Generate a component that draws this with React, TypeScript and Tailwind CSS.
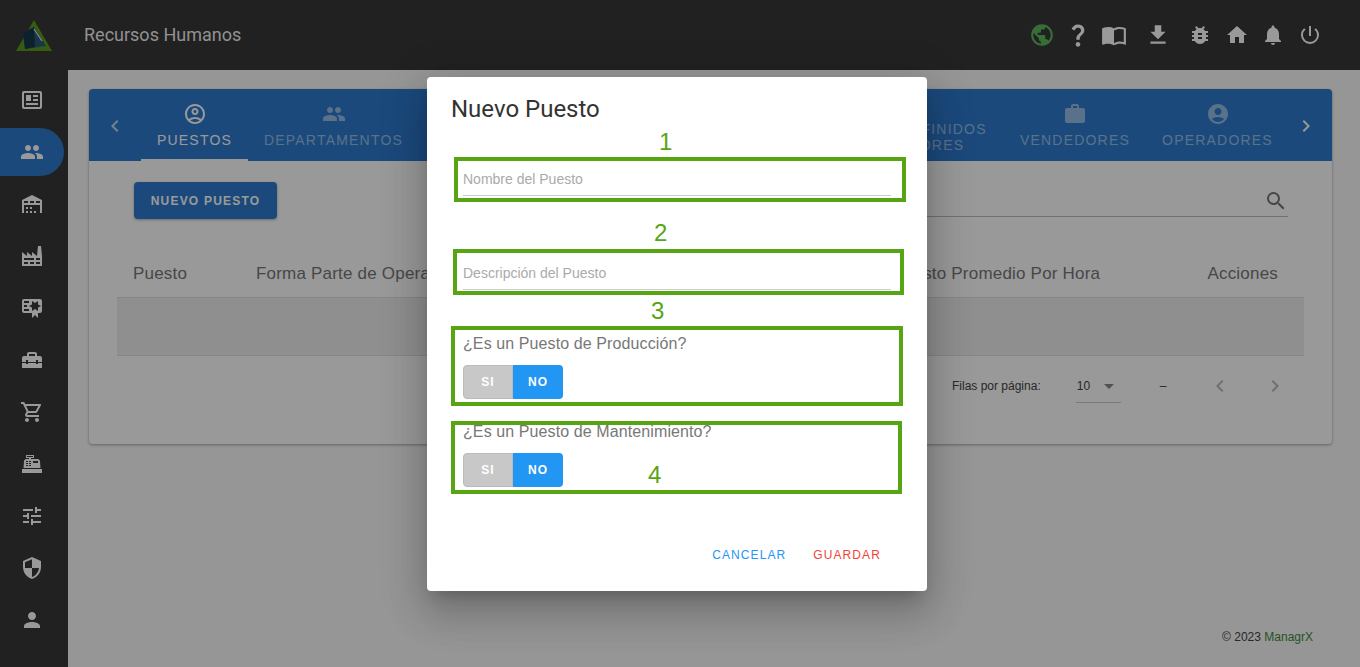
import React from "react"
import {
  MdAccountCircle, MdArrowDropDown, MdBugReport, MdChevronLeft, MdChevronRight, MdFileDownload, MdHome,
  MdNotifications, MdOutlineAccountCircle, MdOutlineShoppingCart, MdPeople, MdPerson, MdPowerSettingsNew,
  MdPublic, MdQuestionMark, MdSearch, MdSecurity, MdTune, MdWork,
} from "react-icons/md"

const MdiIcon = ({ d, className }: { d: string; className?: string }) => (
  <svg viewBox="0 0 24 24" fill="currentColor" className={className}>
    <path d={d} />
  </svg>
)

const paths = {
  news: "M20 3H4C2.89 3 2 3.89 2 5V19C2 20.11 2.89 21 4 21H20C21.11 21 22 20.11 22 19V5C22 3.89 21.11 3 20 3M20 19H4V5H20V19M6 7H11V13H6V7M13 7H18V9H13V7M13 11H18V13H13V11M6 15H18V17H6V15Z",
  warehouse: "M6 19H8V21H6V19M12 3L2 8V21H4V13H20V21H22V8L12 3M8 11H4V9H8V11M14 11H10V9H14V11M20 11H16V9H20V11M6 15H8V17H6V15M10 15H12V17H10V15M10 19H12V21H10V19M14 19H16V21H14V19Z",
  factory: "M4,18V20H8V18H4M4,14V16H14V14H4M10,18V20H14V18H10M16,14V16H20V14H16M16,18V20H20V18H16M2,22V8L7,12V8L12,12V8L17,12L18,2H21L22,12V22H2Z",
  certificate: "M4,3C2.89,3 2,3.89 2,5V15A2,2 0 0,0 4,17H12V22L15,19L18,22V17H20A2,2 0 0,0 22,15V8L22,6V5A2,2 0 0,0 20,3H16V3H4M12,5L15,7L18,5V8.5L21,10L18,11.5V15L15,13L12,15V11.5L9,10L12,8.5V5M4,5H9V7H4V5M4,9H7V11H4V9M4,13H9V15H4V13Z",
  toolbox: "M18 16H16V15H8V16H6V15H2V20H22V15H18V16M20 8H17V6C17 4.9 16.1 4 15 4H9C7.9 4 7 4.9 7 6V8H4C2.9 8 2 8.9 2 10V14H6V12H8V14H16V12H18V14H22V10C22 8.9 21.1 8 20 8M15 8H9V6H15V8Z",
  register: "M2,17H22V21H2V17M6.25,7H9V6H6V3H14V6H11V7H17.8C18.8,7 19.8,8 20,9L20.5,16H3.5L4.05,9C4.05,8 5.05,7 6.25,7M13,9V11H18V9H13M6,9V10H8V9H6M9,9V10H11V9H9M6,11V12H8V11H6M9,11V12H11V11H9M6,13V14H8V13H6M9,13V14H11V13H9M7,4V5H13V4H7Z",
  book: "M12 21.5C10.65 20.65 8.2 20 6.5 20C4.85 20 3.15 20.3 1.75 21.05C1.65 21.1 1.6 21.1 1.5 21.1C1.25 21.1 1 20.85 1 20.6V6C1.6 5.55 2.25 5.25 3 5C4.11 4.65 5.33 4.5 6.5 4.5C8.45 4.5 10.55 4.9 12 6C13.45 4.9 15.55 4.5 17.5 4.5C18.67 4.5 19.89 4.65 21 5C21.75 5.25 22.4 5.55 23 6V20.6C23 20.85 22.75 21.1 22.5 21.1C22.4 21.1 22.35 21.1 22.25 21.05C20.85 20.3 19.15 20 17.5 20C15.8 20 13.35 20.65 12 21.5M12 8V19.5C13.35 18.65 15.8 18 17.5 18C18.7 18 19.9 18.15 21 18.5V7C19.9 6.65 18.7 6.5 17.5 6.5C15.8 6.5 13.35 7.15 12 8Z",
}

const iconClass = "w-6 h-6"

const sideItems = [
  <MdiIcon d={paths.news} className={iconClass} />,
  <MdPeople className={iconClass} />,
  <MdiIcon d={paths.warehouse} className={iconClass} />,
  <MdiIcon d={paths.factory} className={iconClass} />,
  <MdiIcon d={paths.certificate} className={iconClass} />,
  <MdiIcon d={paths.toolbox} className={iconClass} />,
  <MdOutlineShoppingCart className={iconClass} />,
  <MdiIcon d={paths.register} className={iconClass} />,
  <MdTune className={iconClass} />,
  <MdSecurity className={iconClass} />,
  <MdPerson className={iconClass} />,
]

function Field({ placeholder, className }: { placeholder: string; className: string }) {
  return (
    <div className={`ml-[13px] mr-[12px] h-[33px] pt-[2px] flex items-center border-b border-[#cccccc] text-[14px] text-[#aaaaaa] ${className}`}>
      {placeholder}
    </div>
  )
}

function Toggle() {
  return (
    <div className="ml-[13px] mt-[9px] flex w-[100px] h-[34px] text-[12px] font-bold tracking-[1px] text-white">
      <div className="w-[50px] flex items-center justify-center rounded-l-[4px] bg-[#c8c8c8] border border-[#bbbbbb]">SI</div>
      <div className="w-[50px] flex items-center justify-center rounded-r-[4px] bg-[#2196f3]">NO</div>
    </div>
  )
}

function Note({ className }: { className: string }) {
  return <div className={`absolute border-[4px] border-[#57a513] ${className}`} />
}

function NoteNumber({ value, className }: { value: string; className: string }) {
  return (
    <span className={`absolute text-[24px] leading-[28px] text-[#57a513] ${className}`}>
      {value}
    </span>
  )
}

export default function App() {
  return (
    <div className="relative h-screen overflow-hidden flex flex-col bg-[#fafafa] font-['Liberation_Sans',sans-serif]">
      {/* top bar */}
      <header className="h-[70px] shrink-0 flex items-center bg-[#373737] text-white">
        <div className="w-[68px] flex justify-center">
          <svg viewBox="0 0 38 34" className="w-[38px] h-[34px] mt-[1px] mr-[1px]">
            <polygon points="19,1 37,32 1,32" fill="#5a9a1e" />
            <polygon points="19,8 31,27 10,30 8,14" fill="#2a5a78" />
            <polygon points="8,14 19,8 20,28 10,30" fill="#16384a" />
            <line x1="19" y1="10" x2="27" y2="22" stroke="#e8e8e8" strokeWidth="1.2" />
          </svg>
        </div>
        <h1 className="ml-[16px] mb-[2px] text-[18px] font-['Roboto',sans-serif] text-white/95">Recursos Humanos</h1>
        <div className="ml-auto pr-[32px] flex items-center">
          <div className="w-9 flex justify-center text-[#5cb85c]"><MdPublic className="w-[26px] h-[26px]" /></div>
          <div className="w-9 flex justify-center"><MdQuestionMark className="w-[28px] h-[28px]" /></div>
          <div className="w-9 flex justify-center"><MdiIcon d={paths.book} className="w-[26px] h-[26px]" /></div>
          <div className="w-9 ml-2 flex justify-center"><MdFileDownload className="w-[26px] h-[26px]" /></div>
          <div className="w-9 ml-[6px] flex justify-center"><MdBugReport className="w-6 h-6" /></div>
          <div className="w-9 ml-[1px] flex justify-center"><MdHome className="w-6 h-6" /></div>
          <div className="w-9 flex justify-center"><MdNotifications className="w-6 h-6" /></div>
          <div className="w-9 ml-[1px] flex justify-center"><MdPowerSettingsNew className="w-6 h-6" /></div>
        </div>
      </header>

      <div className="flex flex-1 min-h-0">
        {/* side menu */}
        <nav className="w-[68px] shrink-0 bg-[#373737] pt-[6px] flex flex-col gap-1 text-white">
          {sideItems.map((icon, i) => (
            <div
              key={i}
              className={`w-[64px] h-12 flex items-center justify-center rounded-r-[24px] ${i === 1 ? "bg-[#2d7bcf]" : ""}`}
            >
              {icon}
            </div>
          ))}
        </nav>

        <main className="relative flex-1 pl-[21px] pr-[28px] pt-[19px]">
          <section className="h-[355px] bg-white rounded-[4px] shadow-[0_1px_3px_rgba(0,0,0,0.35)]">
            {/* tabs */}
            <div className="h-[72px] flex bg-[#2d7bcf] rounded-t-[4px] text-white text-[14px] tracking-[1.2px]">
              <div className="w-[52px] flex items-center justify-center text-white/70 pt-[2px]"><MdChevronLeft className="w-6 h-6" /></div>
              <div className="w-[107px] shrink-0 flex flex-col items-center pt-[13px] border-b-2 border-white">
                <MdOutlineAccountCircle className="w-6 h-6" />
                <span className="mt-[4px]">PUESTOS</span>
              </div>
              <div className="w-[171px] shrink-0 flex flex-col items-center pt-[13px] text-white/50">
                <MdPeople className="w-6 h-6" />
                <span className="mt-[4px]">DEPARTAMENTOS</span>
              </div>
              <div className="flex-1" />
              <div className="w-[160px] shrink-0 flex items-center justify-center text-center leading-[16px] text-white/50 pt-[24px] pl-[6px]">
                PREDEFINIDOS LABORES
              </div>
              <div className="w-[142px] shrink-0 flex flex-col items-center pt-[13px] text-white/50">
                <MdWork className="w-6 h-6" />
                <span className="mt-[4px]">VENDEDORES</span>
              </div>
              <div className="w-[143px] shrink-0 flex flex-col items-center pt-[13px] text-white/50">
                <MdAccountCircle className="w-6 h-6" />
                <span className="mt-[4px]">OPERADORES</span>
              </div>
              <div className="w-[34px] shrink-0 mr-[9px] flex items-center justify-center pt-[2px]"><MdChevronRight className="w-6 h-6" /></div>
            </div>

            {/* toolbar */}
            <div className="h-[72px] flex items-start pl-[45px] pr-[44px]">
              <button className="mt-[21px] w-[143px] h-[37px] rounded-[4px] bg-[#2d7bcf] text-white text-[12px] font-bold tracking-[1.2px] shadow-[0_1px_3px_rgba(0,0,0,0.3)]">
                NUEVO PUESTO
              </button>
              <div className="ml-auto mt-[24px] w-[400px] h-[32px] flex items-center justify-end border-b border-[#bdbdbd] text-[#757575]">
                <MdSearch className="w-6 h-6" />
              </div>
            </div>

            {/* table */}
            <div className="mx-[28px]">
              <div className="h-[65px] pt-[18px] flex items-center text-[17px] tracking-[0.2px] text-[#777777] border-b border-[#e0e0e0]">
                <div className="w-[139px] pl-[16px]">Puesto</div>
                <div className="flex-1">Forma Parte de Operaciones</div>
                <div className="w-[224px]">Costo Promedio Por Hora</div>
                <div className="w-[179px] pr-[26px] text-right">Acciones</div>
              </div>
              <div className="h-[58px] bg-[#eeeeee] border-b border-[#e0e0e0]" />
              <div className="h-[60px] flex items-center text-[12px] text-[#444444]">
                <span className="ml-[835px]">Filas por página:</span>
                <div className="relative ml-[35px] w-[45px] h-[32px] flex items-center border-b border-[#cccccc] pl-[1px] mt-[1px]">
                  10
                  <MdArrowDropDown className="absolute right-0 w-6 h-6 text-[#888888]" />
                </div>
                <span className="ml-[39px]">–</span>
                <MdChevronLeft className="ml-[42px] w-6 h-6 text-[#bbbbbb]" />
                <MdChevronRight className="ml-[31px] w-6 h-6 text-[#bbbbbb]" />
              </div>
            </div>
          </section>
        </main>
      </div>

      <footer className="absolute right-[47px] top-[630px] text-[12px] leading-[14px] text-[#444444]">
        © 2023 <span className="text-[#3c8c3c]">ManagrX</span>
      </footer>

      {/* dialog */}
      <div className="absolute inset-0 pr-[6px] bg-black/40 flex items-center justify-center">
        <div className="relative w-[500px] bg-white rounded-[4px] shadow-[0_11px_15px_-7px_rgba(0,0,0,0.2),0_24px_38px_3px_rgba(0,0,0,0.14),0_9px_46px_8px_rgba(0,0,0,0.12)] pt-[16px] pb-[18px] flex flex-col">
          <h2 className="ml-[24px] text-[24px] leading-[32px] font-['Roboto',sans-serif] text-[#333333]">Nuevo Puesto</h2>
          <div className="ml-[23px] mr-[24px] flex flex-col">
            <Field placeholder="Nombre del Puesto" className="mt-[38px] mr-[12px]" />
            <Field placeholder="Descripción del Puesto" className="mt-[61px] mr-[12px]" />
            <p className="ml-[13px] mt-[42px] text-[16px] leading-[24px] tracking-[0.1px] text-[#777777]">¿Es un Puesto de Producción?</p>
            <Toggle />
            <p className="ml-[13px] mt-[21px] text-[16px] leading-[24px] tracking-[0.1px] text-[#777777]">¿Es un Puesto de Mantenimiento?</p>
            <Toggle />
          </div>
          <div className="mt-[50px] h-[36px] flex items-center justify-end pr-[46px] text-[12px] tracking-[1.1px]">
            <span className="text-[#2196f3]">CANCELAR</span>
            <span className="ml-[27px] text-[#f44336]">GUARDAR</span>
          </div>

          {/* annotations */}
          <Note className="left-[27px] top-[80px] w-[452px] h-[45px]" />
          <Note className="left-[26px] top-[172px] w-[451px] h-[46px]" />
          <Note className="left-[24px] top-[249px] w-[452px] h-[80px]" />
          <Note className="left-[24px] top-[344px] w-[451px] h-[73px]" />
          <NoteNumber value="1" className="left-[232px] top-[51px]" />
          <NoteNumber value="2" className="left-[227px] top-[142px]" />
          <NoteNumber value="3" className="left-[224px] top-[220px]" />
          <NoteNumber value="4" className="left-[221px] top-[384px]" />
        </div>
      </div>
    </div>
  )
}
